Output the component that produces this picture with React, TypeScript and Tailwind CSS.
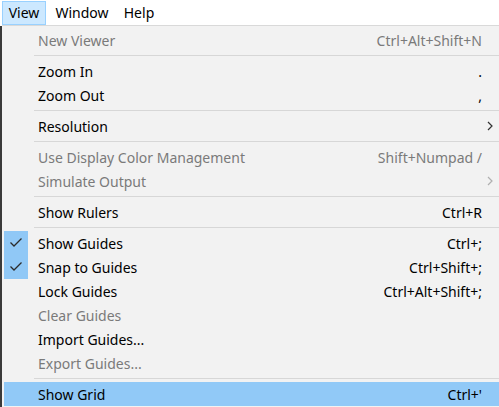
import React from "react";

type Item =
  | { kind: "sep" }
  | {
      kind: "item";
      label: string;
      shortcut?: string;
      disabled?: boolean;
      checked?: boolean;
      submenu?: boolean;
      active?: boolean;
    };

const items: Item[] = [
  { kind: "item", label: "New Viewer", shortcut: "Ctrl+Alt+Shift+N", disabled: true },
  { kind: "sep" },
  { kind: "item", label: "Zoom In", shortcut: "." },
  { kind: "item", label: "Zoom Out", shortcut: "," },
  { kind: "sep" },
  { kind: "item", label: "Resolution", submenu: true },
  { kind: "sep" },
  { kind: "item", label: "Use Display Color Management", shortcut: "Shift+Numpad /", disabled: true },
  { kind: "item", label: "Simulate Output", submenu: true, disabled: true },
  { kind: "sep" },
  { kind: "item", label: "Show Rulers", shortcut: "Ctrl+R" },
  { kind: "sep" },
  { kind: "item", label: "Show Guides", shortcut: "Ctrl+;", checked: true },
  { kind: "item", label: "Snap to Guides", shortcut: "Ctrl+Shift+;", checked: true },
  { kind: "item", label: "Lock Guides", shortcut: "Ctrl+Alt+Shift+;" },
  { kind: "item", label: "Clear Guides", disabled: true },
  { kind: "item", label: "Import Guides..." },
  { kind: "item", label: "Export Guides...", disabled: true },
  { kind: "sep" },
  { kind: "item", label: "Show Grid", shortcut: "Ctrl+'", active: true },
];

function Check() {
  return (
    <svg width="24" height="24" viewBox="0 0 24 24">
      <polyline points="6.5,11.5 10,15 17.5,7.5" fill="none" stroke="#2b2b2b" strokeWidth="1.3" />
    </svg>
  );
}

function Chevron({ disabled }: { disabled?: boolean }) {
  return (
    <svg width="6" height="10" viewBox="0 0 6 10">
      <polyline points="1,1 5,5 1,9" fill="none" stroke={disabled ? "#b0b0b0" : "#333"} strokeWidth="1.2" />
    </svg>
  );
}

export default function App() {
  return (
    <div className="w-[499px] h-[407px] overflow-hidden bg-white text-[14px] leading-none" style={{ fontFamily: '"Segoe UI", "Noto Sans", sans-serif' }}>
      <div className="flex h-[25px] items-stretch pt-px pl-[2px]">
        <div className="flex w-[44px] items-center justify-center bg-[#cce8ff] border border-[#99d1ff]">View</div>
        <div className="flex w-[72px] items-center justify-center">Window</div>
        <div className="flex w-[42px] items-center justify-center">Help</div>
      </div>
      <div className="flex h-[382px]">
        <div className="w-[2px] bg-[#3a3a3a] mt-px" />
        <div className="flex-1 bg-[#f2f2f2] border-t border-[#d9d9d9] pt-[2px]">
          {items.map((it, i) =>
            it.kind === "sep" ? (
              <div key={i} className="h-[7px] pt-[3px] pl-[32px]">
                <div className="h-px bg-[#d7d7d7]" />
              </div>
            ) : (
              <div
                key={i}
                className={`flex h-[24px] items-center ml-[2px] ${it.active ? "bg-[#91c9f7]" : ""} ${it.disabled ? "text-[#7a7a7a]" : "text-black"}`}
              >
                <div className="w-[34px] h-[24px] shrink-0">
                  {it.checked && (
                    <div className="w-[24px] h-[24px] bg-[#90c8f6]">
                      <Check />
                    </div>
                  )}
                </div>
                <div className="flex-1 whitespace-nowrap pt-[2px]">{it.label}</div>
                <div className="whitespace-nowrap pt-[2px]">{it.shortcut}</div>
                <div className="w-[17px] flex items-center pl-[5px]">
                  {it.submenu && <Chevron disabled={it.disabled} />}
                </div>
              </div>
            )
          )}
        </div>
      </div>
    </div>
  );
}
